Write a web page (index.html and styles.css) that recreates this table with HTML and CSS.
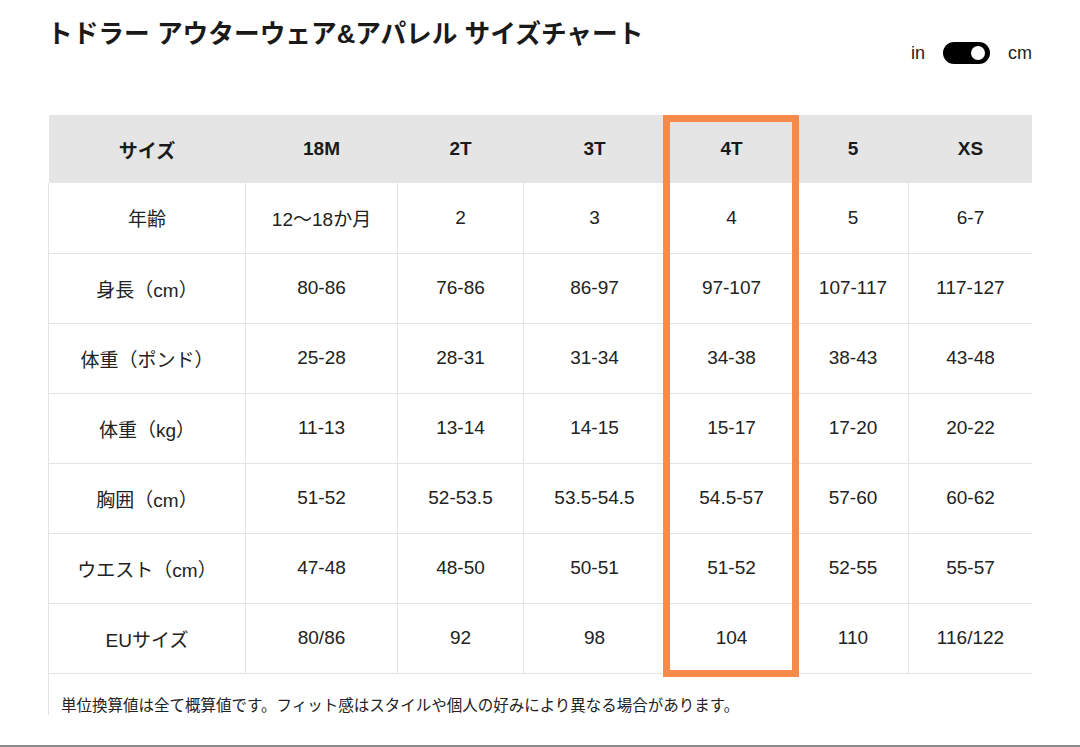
FILE: index.html
```html
<!DOCTYPE html>
<html lang="ja">
<head>
<meta charset="utf-8">
<title>サイズチャート</title>
<link rel="stylesheet" href="styles.css">
</head>
<body>
<div class="page">
  <header class="top">
    <h1 class="title">トドラー アウターウェア&amp;アパレル サイズチャート</h1>
    <div class="units">
      <span class="unit">in</span>
      <span class="switch"><span class="knob"></span></span>
      <span class="unit">cm</span>
    </div>
  </header>
  <div class="chart">
    <table class="size-table">
      <colgroup>
        <col class="c0"><col class="c1"><col class="c2"><col class="c3"><col class="c4"><col class="c5"><col class="c6">
      </colgroup>
      <thead>
        <tr><th>サイズ</th><th>18M</th><th>2T</th><th>3T</th><th>4T</th><th>5</th><th>XS</th></tr>
      </thead>
      <tbody>
        <tr><td>年齢</td><td>12〜18か月</td><td>2</td><td>3</td><td>4</td><td>5</td><td>6-7</td></tr>
        <tr><td>身長（cm）</td><td>80-86</td><td>76-86</td><td>86-97</td><td>97-107</td><td>107-117</td><td>117-127</td></tr>
        <tr><td>体重（ポンド）</td><td>25-28</td><td>28-31</td><td>31-34</td><td>34-38</td><td>38-43</td><td>43-48</td></tr>
        <tr><td>体重（kg）</td><td>11-13</td><td>13-14</td><td>14-15</td><td>15-17</td><td>17-20</td><td>20-22</td></tr>
        <tr><td>胸囲（cm）</td><td>51-52</td><td>52-53.5</td><td>53.5-54.5</td><td>54.5-57</td><td>57-60</td><td>60-62</td></tr>
        <tr><td>ウエスト（cm）</td><td>47-48</td><td>48-50</td><td>50-51</td><td>51-52</td><td>52-55</td><td>55-57</td></tr>
        <tr><td>EUサイズ</td><td>80/86</td><td>92</td><td>98</td><td>104</td><td>110</td><td>116/122</td></tr>
      </tbody>
      <tfoot>
        <tr><td colspan="7" class="note">単位換算値は全て概算値です。フィット感はスタイルや個人の好みにより異なる場合があります。</td></tr>
      </tfoot>
    </table>
    <div class="highlight"></div>
  </div>
</div>
<div class="bottom-bar"></div>
</body>
</html>
```

FILE: styles.css
```css
html, body {
  margin: 0;
  padding: 0;
  background: #ffffff;
}

body {
  font-family: "Liberation Sans", "Noto Sans CJK JP", sans-serif;
  color: #222222;
  height: 747px;
  overflow: hidden;
  display: flex;
  flex-direction: column;
}

.page {
  padding: 0 48px;
  flex: 1;
}

.top {
  display: flex;
  justify-content: space-between;
  align-items: flex-start;
  height: 115px;
}

.title {
  margin: 17px 0 0 -1px;
  font-size: 25.7px;
  line-height: 34px;
  font-weight: 700;
  color: #1a1a1a;
  letter-spacing: 0;
}

.units {
  display: flex;
  align-items: center;
  margin-top: 42px;
}

.unit {
  font-size: 18px;
  color: #222;
  line-height: 22px;
}

.switch {
  position: relative;
  display: inline-block;
  width: 47px;
  height: 22px;
  border-radius: 11px;
  background: #000;
  margin: 0 18px;
}

.knob {
  position: absolute;
  right: 5px;
  top: 4px;
  width: 14px;
  height: 14px;
  border-radius: 50%;
  background: #fff;
}

.chart {
  position: relative;
  height: 600px;
  overflow: hidden;
}

.size-table {
  width: 984px;
  table-layout: fixed;
  border-collapse: collapse;
  font-size: 19px;
}

.c0 { width: 197px; }
.c1 { width: 152px; }
.c2 { width: 126px; }
.c3 { width: 142px; }
.c4 { width: 132px; }
.c5 { width: 111px; }
.c6 { width: 124px; }

.size-table th {
  background: #e5e5e5;
  height: 68px;
  padding: 0;
  font-weight: 700;
  text-align: center;
  color: #1a1a1a;
}

.size-table td {
  height: 70px;
  padding: 0;
  text-align: center;
  border: 1px solid #e3e3e3;
  box-sizing: border-box;
}

.size-table tbody tr:first-child td {
  border-top: none;
}

.size-table td.note {
  height: 60px;
  text-align: left;
  vertical-align: top;
  padding: 19px 12px 0;
  font-size: 15.5px;
  border-bottom: none;
}

.highlight {
  position: absolute;
  left: 615px;
  top: 0;
  width: 136px;
  height: 562px;
  box-sizing: border-box;
  border: 7px solid #f58a4b;
  pointer-events: none;
}

.bottom-bar {
  height: 2px;
  background: #8a8a8a;
  margin-bottom: 0;
}
```
